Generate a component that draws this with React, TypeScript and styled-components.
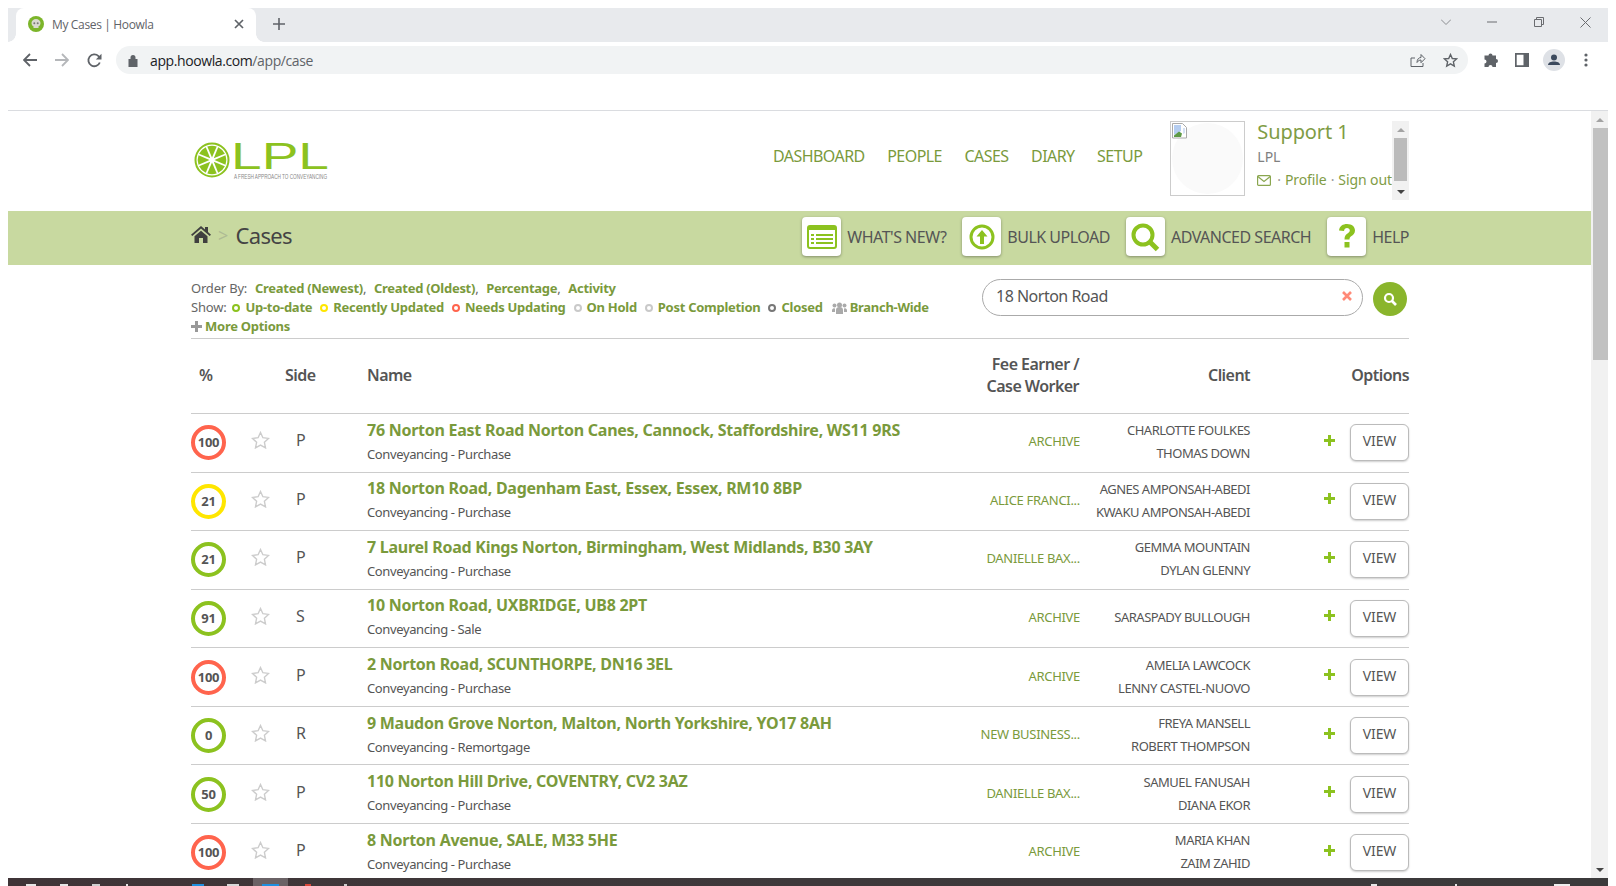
import React from "react";
import styled, { createGlobalStyle } from "styled-components";

const Global = createGlobalStyle`
  html, body { margin: 0; padding: 0; height: 886px; overflow: hidden; background: #fff; }
  * { box-sizing: border-box; }
  body { font-family: "Noto Sans", "Open Sans", sans-serif; color: #555; }
`;

const Win = styled.div`
  width: 1616px; height: 886px; padding: 8px 8px 0; display: flex; flex-direction: column; background: #fff; overflow: hidden;
`;
const TabStrip = styled.div`
  height: 34px; flex: none; background: #e8eaed; display: flex; align-items: stretch; padding-left: 8px;
`;
const Tab = styled.div`
  position: relative; width: 240px; background: #fff; border-radius: 8px 8px 0 0; display: flex; align-items: center; padding: 0 12px 2px;
  font: 12px "Open Sans", sans-serif; letter-spacing: -.35px; color: #5f6368;
  &::before, &::after { content: ""; position: absolute; bottom: 0; width: 8px; height: 8px; }
  &::before { left: -8px; background: radial-gradient(circle at 0 0, #e8eaed 7.5px, #fff 8px); }
  &::after { right: -8px; background: radial-gradient(circle at 100% 0, #e8eaed 7.5px, #fff 8px); }
`;
const TabTitle = styled.span`
  flex: 1; margin-left: 8px;
`;
const NewTab = styled.div`
  margin-left: 14px; width: 18px; padding-bottom: 2px; display: flex; align-items: center; justify-content: center;
`;
const WinControls = styled.div`
  margin-left: auto; display: flex; align-items: center; padding-bottom: 6px;
`;
const WinBtn = styled.div<{ $w: number }>`
  width: ${(p) => p.$w}px; display: flex; justify-content: center;
`;
const Toolbar = styled.div`
  height: 36px; flex: none; display: flex; align-items: flex-start; padding: 4px 0 0 12px;
`;
const NavIcon = styled.div`
  width: 20px; height: 28px; margin-right: 12px; display: flex; align-items: center; justify-content: center;
`;
const Omni = styled.div`
  width: 1352px; height: 28px; background: #f1f3f4; border-radius: 14px; display: flex; align-items: center; padding: 0 2px 0 12px;
  font: 14px "Open Sans", sans-serif; letter-spacing: -.4px; color: #202124;
`;
const Url = styled.span`
  margin-left: 12px; flex: 1; span { color: #5f6368; }
`;
const OmniIcon = styled.div`
  width: 32px; display: flex; justify-content: center;
`;
const ToolIcons = styled.div`
  display: flex; height: 28px; align-items: center; margin-left: 6px;
`;
const ToolIcon = styled.div`
  width: 32px; display: flex; justify-content: center;
`;
const Blank = styled.div`
  height: 33px; flex: none; border-bottom: 1px solid #dadce0;
`;
const Viewport = styled.div`
  flex: 1; min-height: 0; display: flex; overflow: hidden;
`;
const Page = styled.div`
  flex: 1; min-width: 0; overflow: hidden;
`;
const Container = styled.div`
  width: 1218px; margin-left: 183px;
`;
const Header = styled.div`
  height: 100px; display: flex; align-items: flex-start;
`;
const Logo = styled.div`
  width: 582px; padding: 21px 0 0 2px; flex: none;
`;
const LogoImage = styled.svg`
  display: block;
`;
const MainNav = styled.nav`
  display: flex; gap: 22.5px; padding-top: 35px; font-size: 16px; letter-spacing: -.55px; color: #7a9a3c; line-height: 20px; flex: none;
`;
const AvatarBox = styled.div`
  position: relative; width: 75px; height: 75px; margin: 10px 0 0 28px; border: 1px solid #ccc; padding: 1px; flex: none;
`;
const AvatarFace = styled.div`
  width: 100%; height: 100%; border-radius: 50%; background: #fafafa;
`;
const BrokenImage = styled.svg`
  position: absolute; top: 1px; left: 1px;
`;
const Profile = styled.div`
  display: flex; margin: 10px 0 0 12px; height: 79px; flex: 1;
`;
const ProfileInfo = styled.div`
  flex: 1; color: #7f9c45;
`;
const UserName = styled.div`
  font-size: 20px; line-height: 24px; letter-spacing: -.1px; margin-top: -1px;
`;
const Org = styled.div`
  font-size: 14px; color: #808080; line-height: 18px; margin-top: 4px;
`;
const ProfileLinks = styled.div`
  font-size: 14px; line-height: 18px; margin-top: 5px; display: flex; align-items: center; white-space: pre; letter-spacing: -.1px;
`;
const MailIcon = styled.svg`
  margin-right: 2px; flex: none;
`;
const LinkDot = styled.span`
  color: #999; margin: 0 4px;
`;
const MiniBar = styled.div`
  width: 17px; background: #f1f1f1; display: flex; flex-direction: column; align-items: center; flex: none;
`;
const MiniThumb = styled.div`
  width: 13px; height: 43px; background: #bbb; margin: 0 0 2px; flex: none;
`;
const Arrow = styled.div<{ $up?: boolean; $dark?: boolean }>`
  height: 17px; width: 100%; flex: none; display: flex; align-items: center; justify-content: center;
  &::before { content: ""; border-left: 4px solid transparent; border-right: 4px solid transparent;
    ${(p) => (p.$up ? "border-bottom" : "border-top")}: 4px solid ${(p) => (p.$dark ? "#444" : "#a3a3a3")}; }
`;
const Band = styled.div`
  height: 54px; background: #c8d9a0;
`;
const BandInner = styled(Container)`
  display: flex; height: 100%; align-items: center;
`;
const Crumb = styled.div`
  display: flex; align-items: center; flex: 1; font-size: 22px; letter-spacing: -.7px; color: #444; padding-bottom: 7px;
`;
const Sep = styled.span`
  color: #aebb94; font-size: 18px; margin: 0 8px 0 7px;
`;
const BandBtn = styled.div`
  display: flex; align-items: center; font-size: 16px; letter-spacing: -.5px; color: #555; margin-left: 16px; padding-bottom: 3px;
`;
const IconTile = styled.div`
  width: 39px; height: 39px; background: #fff; border-radius: 4px; box-shadow: 0 1px 3px rgba(0,0,0,.35); margin-right: 6px;
  display: flex; align-items: center; justify-content: center;
`;
const FilterArea = styled.div`
  height: 74px; display: flex; border-bottom: 1px solid #ccc;
`;
const Filters = styled.div`
  width: 791px; padding-top: 14px; font-size: 13px; line-height: 19px; color: #666; letter-spacing: -.2px;
`;
const FLine = styled.div`
  display: flex; align-items: center; white-space: pre;
`;
const FLink = styled.span`
  font-weight: 700; color: #7a9a3c; letter-spacing: -.28px;
`;
const OrderGap = styled.span`
  margin-right: 1.5px;
`;
const Dot = styled.span<{ $c: string; $ml?: number }>`
  width: 8px; height: 8px; border-radius: 50%; border: 2.5px solid ${(p) => p.$c}; margin: 0 5px 0 ${(p) => p.$ml ?? 8}px; flex: none;
`;
const GroupIcon = styled.svg`
  margin: 0 3px 0 9px; flex: none;
`;
const SearchBox = styled.div`
  width: 381px; height: 37px; margin-top: 14px; border: 1px solid #aaa; border-radius: 19px; display: flex; align-items: center;
  padding: 0 10px 3px 13px; font-size: 16px; letter-spacing: -.5px; color: #555;
`;
const SearchText = styled.span`
  flex: 1;
`;
const SearchGo = styled.div`
  width: 34px; height: 34px; border-radius: 50%; background: #8ab52c; margin: 17px 0 0 10px; display: flex; align-items: center; justify-content: center;
`;
const Cols = "52px 53px 71px 582px 130px 171px 159px";
const HeadRow = styled.div`
  display: grid; grid-template-columns: ${Cols}; height: 75px; align-items: center; font-size: 16px; font-weight: 600; color: #555; line-height: 21.5px; letter-spacing: -.55px;
  border-bottom: 1px solid #ccc; padding-bottom: 1px;
`;
const HeadCell = styled.div<{ $right?: boolean; $pl?: number }>`
  text-align: ${(p) => (p.$right ? "right" : "left")}; padding-left: ${(p) => p.$pl ?? 0}px;
`;
const SideHead = styled.span`
  margin-left: -11px;
`;
const Row = styled.div`
  display: grid; grid-template-columns: ${Cols}; height: 58.57px; align-items: center; border-bottom: 1px solid #ccc;
`;
const Ring = styled.div<{ $c: string }>`
  width: 35px; height: 35px; border-radius: 50%; border: 4px solid ${(p) => p.$c}; display: flex; align-items: center; justify-content: center;
  font-size: 13px; font-weight: 700; color: #555; letter-spacing: -.2px; padding-bottom: 1px;
`;
const StarCell = styled.div`
  padding-left: 8px; display: flex; padding-bottom: 5px;
`;
const SideCell = styled.div`
  font-size: 16px; color: #555; padding-bottom: 5px;
`;
const NameCell = styled.div`
  white-space: nowrap; padding-bottom: 5px;
`;
const Title = styled.div`
  font-size: 16px; font-weight: 700; color: #7a9a3c; line-height: 24px; letter-spacing: -.26px;
`;
const Sub = styled.div`
  font-size: 13px; color: #555; line-height: 18px; margin-top: 3px; letter-spacing: -.38px;
`;
const Fee = styled.div`
  font-size: 13px; color: #7a9a3c; text-align: right; white-space: nowrap; padding-bottom: 3px; letter-spacing: -.3px; margin-right: -1px;
`;
const Client = styled.div`
  font-size: 13px; color: #555; text-align: right; line-height: 23px; white-space: nowrap; padding-bottom: 1px; letter-spacing: -.5px;
`;
const Opts = styled.div`
  display: flex; align-items: center; justify-content: flex-end; gap: 15px;
`;
const PlusWrap = styled.span`
  display: flex; margin-bottom: 5px;
`;
const ViewBtn = styled.div`
  width: 59px; height: 37px; border: 1px solid #bbb; border-radius: 6px; box-shadow: 0 1px 2px rgba(0,0,0,.2); display: flex; align-items: center; justify-content: center;
  font-size: 14px; color: #555; background: #fff; padding-bottom: 4px; letter-spacing: -.1px;
`;
const RightBar = styled.div`
  width: 17px; flex: none; background: #f1f1f1; display: flex; flex-direction: column; align-items: flex-end;
`;
const RightThumb = styled.div`
  width: 15px; height: 232px; background: #c1c1c1; flex: none;
`;
const Spacer = styled.div`
  flex: 1;
`;
const Taskbar = styled.div`
  height: 8px; flex: none; background: linear-gradient(90deg, #3f3437, #3e393b 50%, #3b3a3b); display: flex; align-items: flex-end;
`;
const TrayHighlight = styled.div`
  position: relative; align-self: stretch; width: 35px; margin-left: 14px; background: #6a6265; display: flex; align-items: flex-end; justify-content: center;
`;
const TrayBit = styled.div<{ $w: number; $ml: number; $c: string }>`
  width: ${(p) => p.$w}px; height: 2px; margin-left: ${(p) => p.$ml}px; background: ${(p) => p.$c}; flex: none;
`;

const L = "#8cc21f";

const LogoSvg = () => (
  <LogoImage width="190" height="52" viewBox="0 -6 190 52">
    <circle cx="19" cy="22" r="16.500" fill="none" stroke={L} strokeWidth="2" />
    {[0, 45, 90, 135, 180, 225, 270, 315].map((a) => (
      <path key={a} d="M19 19.500 L14.300 8.500 A14.200 14.200 0 0 1 23.700 8.500 Z" transform={`rotate(${a} 19 22)`} fill={L} />
    ))}
    <text x="38" y="31" fontFamily="Liberation Sans, sans-serif" fontSize="37" fill={L} textLength="98" lengthAdjust="spacingAndGlyphs">LPL</text>
    <text x="41" y="41" fontFamily="Liberation Sans, sans-serif" fontSize="6.500" fill="#888" textLength="93" lengthAdjust="spacingAndGlyphs">A FRESH APPROACH TO CONVEYANCING</text>
  </LogoImage>
);

const Star = () => (
  <svg width="19" height="18" viewBox="0 0 19 18" fill="none" stroke="#ccc" strokeWidth="1.400">
    <path d="M9.500 1.500l2.400 5.200 5.600.7-4.100 3.900 1.100 5.600-5-2.800-5 2.800 1.100-5.600L1.500 7.400l5.600-.7z" />
  </svg>
);

const Plus = ({ c = L, s = 11 }: { c?: string; s?: number }) => (
  <svg width={s} height={s} viewBox="0 0 11 11"><path d="M4 0h3v4h4v3H7v4H4V7H0V4h4z" fill={c} /></svg>
);

const rows = [
  { p: "100", c: "#ff644d", s: "P", t: "76 Norton East Road Norton Canes, Cannock, Staffordshire, WS11 9RS", k: "Conveyancing - Purchase", f: "ARCHIVE", n: ["CHARLOTTE FOULKES", "THOMAS DOWN"] },
  { p: "21", c: "#ffe600", s: "P", t: "18 Norton Road, Dagenham East, Essex, Essex, RM10 8BP", k: "Conveyancing - Purchase", f: "ALICE FRANCI...", n: ["AGNES AMPONSAH-ABEDI", "KWAKU AMPONSAH-ABEDI"] },
  { p: "21", c: L, s: "P", t: "7 Laurel Road Kings Norton, Birmingham, West Midlands, B30 3AY", k: "Conveyancing - Purchase", f: "DANIELLE BAX...", n: ["GEMMA MOUNTAIN", "DYLAN GLENNY"] },
  { p: "91", c: L, s: "S", t: "10 Norton Road, UXBRIDGE, UB8 2PT", k: "Conveyancing - Sale", f: "ARCHIVE", n: ["SARASPADY BULLOUGH"] },
  { p: "100", c: "#ff644d", s: "P", t: "2 Norton Road, SCUNTHORPE, DN16 3EL", k: "Conveyancing - Purchase", f: "ARCHIVE", n: ["AMELIA LAWCOCK", "LENNY CASTEL-NUOVO"] },
  { p: "0", c: L, s: "R", t: "9 Maudon Grove Norton, Malton, North Yorkshire, YO17 8AH", k: "Conveyancing - Remortgage", f: "NEW BUSINESS...", n: ["FREYA MANSELL", "ROBERT THOMPSON"] },
  { p: "50", c: L, s: "P", t: "110 Norton Hill Drive, COVENTRY, CV2 3AZ", k: "Conveyancing - Purchase", f: "DANIELLE BAX...", n: ["SAMUEL FANUSAH", "DIANA EKOR"] },
  { p: "100", c: "#ff644d", s: "P", t: "8 Norton Avenue, SALE, M33 5HE", k: "Conveyancing - Purchase", f: "ARCHIVE", n: ["MARIA KHAN", "ZAIM ZAHID"] },
];

export default function App() {
  return (
    <>
      <Global />
      <Win>
        <TabStrip>
          <Tab>
            <svg width="16" height="16" viewBox="0 0 16 16">
              <circle cx="8" cy="8" r="8" fill="#7cb52a" />
              <path d="M3.500 7a4.500 4 0 0 1 9 0c0 2-1 3-2 3.300V12H5.500v-1.700c-1-.3-2-1.300-2-3.300z" fill="#d9d9d0" />
              <circle cx="6.300" cy="7.300" r="1" fill="#777" /><circle cx="9.700" cy="7.300" r="1" fill="#777" />
            </svg>
            <TabTitle>My Cases | Hoowla</TabTitle>
            <svg width="10" height="10" viewBox="0 0 10 10" stroke="#5f6368" strokeWidth="1.700"><path d="M1 1l8 8M9 1l-8 8" /></svg>
          </Tab>
          <NewTab>
            <svg width="12" height="12" viewBox="0 0 12 12" stroke="#5f6368" strokeWidth="1.600"><path d="M6 0v12M0 6h12" /></svg>
          </NewTab>
          <WinControls>
            <WinBtn $w={46}><svg width="10" height="6" viewBox="0 0 10 6" fill="none" stroke="#8a8c90"><path d="M0 .5l5 5 5-5" /></svg></WinBtn>
            <WinBtn $w={46}><svg width="10" height="2" viewBox="0 0 10 2" stroke="#6a6c70"><path d="M0 1h10" /></svg></WinBtn>
            <WinBtn $w={47}><svg width="10" height="10" viewBox="0 0 10 10" fill="none" stroke="#6a6c70"><path d="M.5 2.500h7v7h-7zM2.500 2.500v-2h7v7h-2" /></svg></WinBtn>
            <WinBtn $w={46}><svg width="11" height="11" viewBox="0 0 11 11" stroke="#6a6c70"><path d="M.5.5l10 10M10.500.5l-10 10" /></svg></WinBtn>
          </WinControls>
        </TabStrip>
        <Toolbar>
          <NavIcon><svg width="14" height="14" viewBox="0 0 14 14" fill="none" stroke="#5f6368" strokeWidth="1.800"><path d="M14 7H1.500M7 1L1 7l6 6" /></svg></NavIcon>
          <NavIcon><svg width="14" height="14" viewBox="0 0 14 14" fill="none" stroke="#b5b7ba" strokeWidth="1.800"><path d="M0 7h12.500M7 1l6 6-6 6" /></svg></NavIcon>
          <NavIcon><svg width="15" height="15" viewBox="0 0 15 15" fill="none"><path d="M12.800 9.500A5.900 5.900 0 1 1 11.500 3.200L13.500 5" stroke="#5f6368" strokeWidth="1.800" /><path d="M14.500.8v5.700H8.800z" fill="#5f6368" /></svg></NavIcon>
          <Omni>
            <svg width="10" height="13" viewBox="0 0 10 13"><path d="M2.500 5V3.500a2.500 2.500 0 0 1 5 0V5H9.500v8H.5V5z" fill="#5f6368" /></svg>
            <Url>app.hoowla.com<span>/app/case</span></Url>
            <OmniIcon><svg width="16" height="15" viewBox="0 0 16 15" fill="none" stroke="#5f6368"><path d="M13 10v3.500H1V5h4M7 9.500C7 6 9 4.500 11 4.500V1.500l4 4.200-4 4V7C9.500 7 8 7.800 7 9.500z" /></svg></OmniIcon>
            <OmniIcon><svg width="15" height="15" viewBox="0 0 15 15" fill="none" stroke="#5f6368" strokeWidth="1.400"><path d="M7.500 1.500l1.800 4 4.300.4-3.200 2.900.9 4.300-3.800-2.200-3.800 2.200.9-4.300L1.400 5.900l4.300-.4z" /></svg></OmniIcon>
          </Omni>
          <ToolIcons>
            <ToolIcon><svg width="15" height="15" viewBox="0 0 15 15"><path d="M5.500 2.500a2 2 0 0 1 4 0H13v3.500a2 2 0 0 1 0 4V14H9.500a2 2 0 0 0-4 0H1.500v-3.500a2 2 0 0 0 0-4V2.500z" fill="#5f6368" /></svg></ToolIcon>
            <ToolIcon><svg width="14" height="14" viewBox="0 0 14 14"><path d="M0 0h14v14H0zM1.700 1.700v10.600H8.500V1.700z" fill="#5f6368" fillRule="evenodd" /></svg></ToolIcon>
            <ToolIcon><svg width="22" height="22" viewBox="0 0 22 22"><circle cx="11" cy="11" r="11" fill="#dee1e6" /><circle cx="11" cy="8.500" r="3" fill="#3c4a5e" /><path d="M5 16c0-2.500 3-3.500 6-3.500s6 1 6 3.500z" fill="#3c4a5e" /></svg></ToolIcon>
            <ToolIcon><svg width="4" height="14" viewBox="0 0 4 14" fill="#5f6368"><circle cx="2" cy="2" r="1.600" /><circle cx="2" cy="7" r="1.600" /><circle cx="2" cy="12" r="1.600" /></svg></ToolIcon>
          </ToolIcons>
        </Toolbar>
        <Blank />
        <Viewport>
          <Page>
            <Container>
              <Header>
                <Logo><LogoSvg /></Logo>
                <MainNav><span>DASHBOARD</span><span>PEOPLE</span><span>CASES</span><span>DIARY</span><span>SETUP</span></MainNav>
                <AvatarBox>
                  <AvatarFace />
                  <BrokenImage width="16" height="16" viewBox="0 0 16 16"><path d="M.5.5h10l4 4v10.500H.5z" fill="#fff" stroke="#aaa" /><path d="M2 2h7v6l-7 4z" fill="#b5cdf0" /><path d="M2 14v-1.500l5-4 3 2-1 3.500z" fill="#5e9a45" /><path d="M11 5h2v5l-2 1z" fill="#d6e2f5" /></BrokenImage>
                </AvatarBox>
                <Profile>
                  <ProfileInfo>
                    <UserName>Support 1</UserName>
                    <Org>LPL</Org>
                    <ProfileLinks>
                      <MailIcon width="14" height="11" viewBox="0 0 14 11" fill="none" stroke="#8aa64f" strokeWidth="1.200"><rect x=".6" y=".6" width="12.800" height="9.800" rx="1" /><path d="M.8 1.500L7 6.500l6.200-5" /></MailIcon>
                      <LinkDot>·</LinkDot><span>Profile</span><LinkDot>·</LinkDot><span>Sign out</span>
                    </ProfileLinks>
                  </ProfileInfo>
                  <MiniBar><Arrow $up /><MiniThumb /><Arrow $dark /></MiniBar>
                </Profile>
              </Header>
            </Container>
            <Band>
              <BandInner>
                <Crumb>
                  <svg width="20" height="17" viewBox="0 0 20 17"><path d="M10 0l4 3.500V1h3v5l3 2.700-1.300 1.300L10 2.500 1.300 10 0 8.700zM3.500 10.300L10 4.800l6.500 5.500V17h-4.500v-5H8v5H3.500z" fill="#3f3f3f" /></svg>
                  <Sep>&gt;</Sep>Cases
                </Crumb>
                <BandBtn>
                  <IconTile><svg width="30" height="24" viewBox="0 0 30 24"><rect x="1" y="1" width="28" height="22" rx="2" fill="#fff" stroke={L} strokeWidth="2" /><path d="M1 1h28v4H1z" fill={L} /><path d="M4 9h3v2H4zM9 9h17v2H9zM4 13h3v2H4zM9 13h17v2H9zM4 17h3v2H4zM9 17h17v2H9z" fill={L} /></svg></IconTile>
                  WHAT'S NEW?
                </BandBtn>
                <BandBtn>
                  <IconTile><svg width="26" height="26" viewBox="0 0 26 26"><circle cx="13" cy="13" r="11" fill="none" stroke={L} strokeWidth="3" /><path d="M13 6l5.500 6.500H15V20h-4v-7.500H7.500z" fill={L} /></svg></IconTile>
                  BULK UPLOAD
                </BandBtn>
                <BandBtn>
                  <IconTile><svg width="30" height="30" viewBox="0 0 30 30" fill="none" stroke={L}><circle cx="13" cy="13" r="9.500" strokeWidth="4" /><path d="M20 20l7.500 7.500" strokeWidth="5" /></svg></IconTile>
                  ADVANCED SEARCH
                </BandBtn>
                <BandBtn>
                  <IconTile><svg width="18" height="28" viewBox="0 0 18 28"><path d="M1 7.500C1.500 3 5 1 9 1c5 0 8 2.800 8 6.500 0 3-2 4.500-3.500 5.500-1.500 1-2 1.500-2 3.500H6.500c0-3.500 1-4.500 3-6 1.500-1 2.300-1.800 2.300-3 0-1.500-1.200-2.400-2.800-2.400S6.200 6.300 6 8z" fill={L} /><rect x="6.500" y="19" width="5" height="5.500" fill={L} /></svg></IconTile>
                  HELP
                </BandBtn>
              </BandInner>
            </Band>
            <Container>
              <FilterArea>
                <Filters>
                  <FLine><OrderGap>Order By:  </OrderGap><FLink>Created (Newest)</FLink><OrderGap>,  </OrderGap><FLink>Created (Oldest)</FLink><OrderGap>,  </OrderGap><FLink>Percentage</FLink><OrderGap>,  </OrderGap><FLink>Activity</FLink></FLine>
                  <FLine>Show:<Dot $c={L} $ml={6} /><FLink>Up-to-date</FLink><Dot $c="#ffe600" /><FLink>Recently Updated</FLink><Dot $c="#ff644d" /><FLink>Needs Updating</FLink><Dot $c="#c9c9c9" /><FLink>On Hold</FLink><Dot $c="#c9c9c9" /><FLink>Post Completion</FLink><Dot $c="#777" /><FLink>Closed</FLink>
                    <GroupIcon width="15" height="12" viewBox="0 0 15 12" fill="#aaa"><circle cx="7.500" cy="3" r="2.500" /><circle cx="2.500" cy="3.500" r="2" /><circle cx="12.500" cy="3.500" r="2" /><path d="M4 12V8a3 2.500 0 0 1 7 0v4zM0 10V8a2 2 0 0 1 3-1.500V10zM15 10V8a2 2 0 0 0-3-1.500V10z" /></GroupIcon>
                    <FLink>Branch-Wide</FLink></FLine>
                  <FLine><Plus c="#999" /><FLink> More Options</FLink></FLine>
                </Filters>
                <SearchBox>
                  <SearchText>18 Norton Road</SearchText>
                  <svg width="10" height="10" viewBox="0 0 10 10" stroke="#ff8a78" strokeWidth="2.600"><path d="M1 1l8 8M9 1l-8 8" /></svg>
                </SearchBox>
                <SearchGo><svg width="14" height="14" viewBox="0 0 14 14" fill="none" stroke="#fff"><circle cx="6" cy="6" r="4" strokeWidth="2.200" /><path d="M9 9l4 4" strokeWidth="2.600" /></svg></SearchGo>
              </FilterArea>
              <HeadRow>
                <HeadCell $pl={8}>%</HeadCell>
                <HeadCell />
                <HeadCell><SideHead>Side</SideHead></HeadCell>
                <HeadCell>Name</HeadCell>
                <HeadCell $right>Fee Earner /<br />Case Worker</HeadCell>
                <HeadCell $right>Client</HeadCell>
                <HeadCell $right>Options</HeadCell>
              </HeadRow>
              {rows.map((r, i) => (
                <Row key={i}>
                  <Ring $c={r.c}>{r.p}</Ring>
                  <StarCell><Star /></StarCell>
                  <SideCell>{r.s}</SideCell>
                  <NameCell><Title>{r.t}</Title><Sub>{r.k}</Sub></NameCell>
                  <Fee>{r.f}</Fee>
                  <Client>{r.n.map((x) => <div key={x}>{x}</div>)}</Client>
                  <Opts><PlusWrap><Plus /></PlusWrap><ViewBtn>VIEW</ViewBtn></Opts>
                </Row>
              ))}
            </Container>
          </Page>
          <RightBar><Arrow $up /><RightThumb /><Spacer /><Arrow $dark /></RightBar>
        </Viewport>
        <Taskbar>
          <TrayBit $w={10} $ml={18} $c="#e6e6e6" />
          <TrayBit $w={8} $ml={24} $c="#e6e6e6" />
          <TrayBit $w={8} $ml={24} $c="#cfcfcf" />
          <TrayBit $w={2} $ml={26} $c="#e6e6e6" />
          <TrayBit $w={12} $ml={64} $c="#1d8fe0" />
          <TrayBit $w={12} $ml={23} $c="#d8d8d8" />
          <TrayHighlight><TrayBit $w={17} $ml={0} $c="#1d8fe0" /></TrayHighlight>
          <TrayBit $w={6} $ml={17} $c="#d9483b" />
          <TrayBit $w={3} $ml={33} $c="#cfcfcf" />
          <TrayBit $w={6} $ml={1024} $c="#e6e6e6" />
          <TrayBit $w={2} $ml={78} $c="#e6e6e6" />
          <TrayBit $w={16} $ml={97} $c="#eeeeee" />
        </Taskbar>
      </Win>
    </>
  );
}
